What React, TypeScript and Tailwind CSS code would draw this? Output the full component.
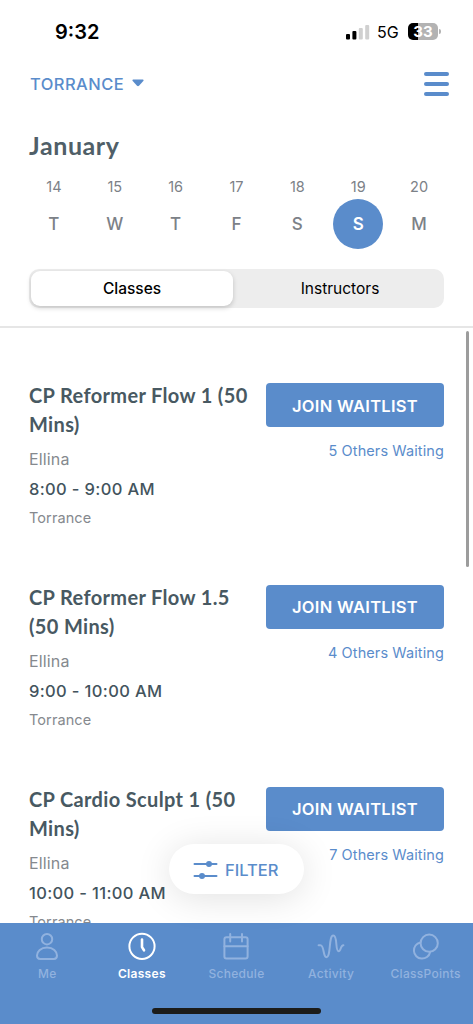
import React, { useState } from "react";

const days = [
  { date: "14", day: "T" },
  { date: "15", day: "W" },
  { date: "16", day: "T" },
  { date: "17", day: "F" },
  { date: "18", day: "S" },
  { date: "19", day: "S" },
  { date: "20", day: "M" },
];

const classes = [
  {
    title: "CP Reformer Flow 1 (50 Mins)",
    instructor: "Ellina",
    time: "8:00 - 9:00 AM",
    location: "Torrance",
    waiting: 5,
  },
  {
    title: "CP Reformer Flow 1.5 (50 Mins)",
    instructor: "Ellina",
    time: "9:00 - 10:00 AM",
    location: "Torrance",
    waiting: 4,
  },
  {
    title: "CP Cardio Sculpt 1 (50 Mins)",
    instructor: "Ellina",
    time: "10:00 - 11:00 AM",
    location: "Torrance",
    waiting: 7,
  },
];

const tabs = [
  {
    label: "Me",
    icon: (
      <>
        <circle cx="14" cy="7.2" r="5.2" />
        <path d="M14 15.4c-6.2 0-10 3.9-10 8.2 0 2.1 1 3.4 3.1 3.4h13.8c2.1 0 3.1-1.3 3.1-3.4 0-4.3-3.8-8.2-10-8.2z" />
      </>
    ),
  },
  {
    label: "Classes",
    icon: (
      <>
        <circle cx="14" cy="14.3" r="12.6" />
        <path d="M14 7.5v7.6l2 3.2" strokeWidth="2.6" />
      </>
    ),
  },
  {
    label: "Schedule",
    icon: (
      <>
        <rect x="2.4" y="5.2" width="23.2" height="21.4" rx="2" />
        <path d="M2.4 14.3h23.2M8.2 2v7.5M20 2v7.5" />
      </>
    ),
  },
  {
    label: "Activity",
    icon: (
      <path d="M1.6 13.2h1.8c4 0 2.5 12 6 12 4.8 0 2-21.6 6.9-21.6 4.6 0 1.6 15.6 5.4 15.6 2.4 0 1.6-6 4.7-6" />
    ),
  },
  {
    label: "ClassPoints",
    icon: (
      <>
        <circle cx="17.2" cy="11.2" r="8.6" />
        <path d="M8.3 10.4a8.2 8.2 0 1 0 9.8 9.8" />
      </>
    ),
  },
];

function StatusBar() {
  return (
    <div className="flex h-[63px] items-center justify-between pl-[55px] pr-[32px] text-black">
      <span className="text-[20px] font-semibold leading-6">9:32</span>
      <div className="flex items-center">
        <svg width="24" height="16" viewBox="0 0 24 16">
          <rect x="0" y="10" width="4" height="5.5" rx="1" fill="#000" />
          <rect x="6.4" y="7" width="4" height="8.5" rx="1" fill="#000" />
          <rect x="12.8" y="4" width="4" height="11.5" rx="1" fill="#d0d0d0" />
          <rect x="19.2" y="1" width="4" height="14.5" rx="1" fill="#d0d0d0" />
        </svg>
        <span className="ml-[7px] w-[23px] pt-px text-[16px] leading-5">
          5G
        </span>
        <div className="ml-[8px] flex h-[17px] w-[30px] items-center justify-center rounded-[5px] bg-linear-to-r from-black from-33% to-[#b3b3b3] to-33% text-[15px] font-bold leading-none text-white">
          33
        </div>
        <span className="ml-px h-[5px] w-[2px] rounded-r-full bg-[#b3b3b3]" />
      </div>
    </div>
  );
}

export default function App() {
  const [selected, setSelected] = useState("19");
  const [activeTab, setActiveTab] = useState("Classes");

  return (
    <div className="relative flex h-[1024px] w-[473px] flex-col overflow-hidden bg-white font-['Inter',sans-serif]">
      <StatusBar />

      {/* Location and menu */}
      <header className="flex h-[42px] items-center justify-between pl-[30px] pr-[24px]">
        <button className="flex items-center gap-[8px] text-[16.5px] font-medium tracking-[0.45px] text-[#5a8ccb]">
          TORRANCE
          <svg
            className="-mt-[3px]"
            width="12"
            height="8"
            viewBox="0 0 12 8"
            fill="currentColor"
          >
            <path d="M1.2 0.5h9.6c.8 0 1 .8.5 1.4L7 6.8c-.6.6-1.4.6-2 0L.7 1.9C.2 1.3.4.5 1.2.5z" />
          </svg>
        </button>
        <div className="flex w-[25px] flex-col gap-[6px]">
          <span className="h-[4px] rounded-full bg-[#5a8ccb]" />
          <span className="h-[4px] rounded-full bg-[#5a8ccb]" />
          <span className="h-[4px] rounded-full bg-[#5a8ccb]" />
        </div>
      </header>

      {/* Calendar strip */}
      <h1 className="ml-[29px] mt-[24px] h-[32px] font-['Lato',sans-serif] text-[25px] font-bold leading-8 tracking-[0.6px] text-[#505f68]">
        January
      </h1>
      <div className="mt-[16px] flex px-[23.5px] text-[#7c8187]">
        {days.map(({ date, day }) => (
          <button
            key={date}
            onClick={() => setSelected(date)}
            className="flex flex-1 flex-col items-center"
          >
            <span className="h-[22px] text-[14.5px] leading-5">{date}</span>
            <span
              className={`flex size-[50px] items-center justify-center rounded-full pt-[2px] text-[17px] ${
                selected === date
                  ? "bg-[#5a8ccb] font-semibold text-white"
                  : "font-medium"
              }`}
            >
              {day}
            </span>
          </button>
        ))}
      </div>

      {/* Segmented control */}
      <div className="mx-[29px] mt-[20px] flex h-[39px] shrink-0 rounded-[10px] bg-[#ededed] p-[2px] text-[15.5px] font-medium text-black">
        <button className="w-[202px] rounded-[9px] bg-white shadow-[0_2px_5px_rgba(0,0,0,0.18)]">
          Classes
        </button>
        <button className="flex-1 pl-[5px] font-normal">Instructors</button>
      </div>
      <div className="mt-[18px] h-[2px] shrink-0 bg-[#e6e6e6]" />

      {/* Class list */}
      <main className="min-h-0 flex-1 overflow-hidden pl-[29px] pr-[29px] pt-[53px]">
        {classes.map((item) => (
          <div key={item.title} className="flex h-[201.8px] justify-between">
            <div className="w-[225px]">
              <h2 className="font-['Lato',sans-serif] text-[20px] font-bold leading-[29px] tracking-[0.35px] text-[#485962]">
                {item.title}
              </h2>
              <p className="mt-[8px] text-[16px] leading-6 tracking-[0.15px] text-[#85898e]">
                {item.instructor}
              </p>
              <p className="mt-[6px] text-[16.5px] font-medium leading-6 tracking-[0.35px] text-[#43545d]">
                {item.time}
              </p>
              <p className="mt-[7px] text-[14.5px] leading-5 tracking-[0.1px] text-[#85898e]">
                {item.location}
              </p>
            </div>
            <div className="mt-[2px] flex flex-col items-end">
              <button className="h-[44px] w-[178px] rounded-[4px] bg-[#5a8ccb] pt-[2px] text-[16.5px] font-semibold tracking-[0.3px] text-white">
                JOIN WAITLIST
              </button>
              <span className="mt-[14px] text-[14.5px] leading-5 tracking-[0.1px] text-[#5a8ccb]">
                {item.waiting} Others Waiting
              </span>
            </div>
          </div>
        ))}
      </main>

      <div className="absolute right-[4px] top-[331px] h-[236px] w-[3px] rounded-full bg-[#9c9c9c]" />

      <button className="absolute left-[169px] top-[844px] flex h-[50px] w-[135px] items-center rounded-full bg-white pl-[24px] pt-px text-[16.5px] font-medium text-[#5a8ccb] shadow-[0_4px_36px_rgba(0,0,0,0.12)]">
        <svg
          width="25"
          height="20"
          viewBox="0 0 25 20"
          fill="currentColor"
          stroke="currentColor"
          strokeWidth="2"
          strokeLinecap="round"
        >
          <path d="M1.5 4h22M1.5 16h22" />
          <circle cx="16" cy="4" r="2" />
          <circle cx="9" cy="16" r="2" />
        </svg>
        <span className="ml-[7px] mt-px">FILTER</span>
      </button>

      {/* Bottom tabs */}
      <nav className="flex h-[101px] shrink-0 bg-[#5a8ccb] pt-[9px]">
        {tabs.map(({ label, icon }) => (
          <button
            key={label}
            onClick={() => setActiveTab(label)}
            className={`flex flex-1 flex-col items-center text-[12px] tracking-[0.3px] ${
              activeTab === label
                ? "font-semibold text-white"
                : "font-medium text-[#91b2df]"
            }`}
          >
            <svg
              width="28"
              height="28"
              viewBox="0 0 28 28"
              fill="none"
              stroke="currentColor"
              strokeWidth="2"
              strokeLinecap="round"
              strokeLinejoin="round"
            >
              {icon}
            </svg>
            <span className="mt-[6px] leading-4">{label}</span>
          </button>
        ))}
      </nav>
      <div className="absolute bottom-[10px] left-[152px] h-[6px] w-[169px] rounded-full bg-[#1c1c1a]" />
    </div>
  );
}
